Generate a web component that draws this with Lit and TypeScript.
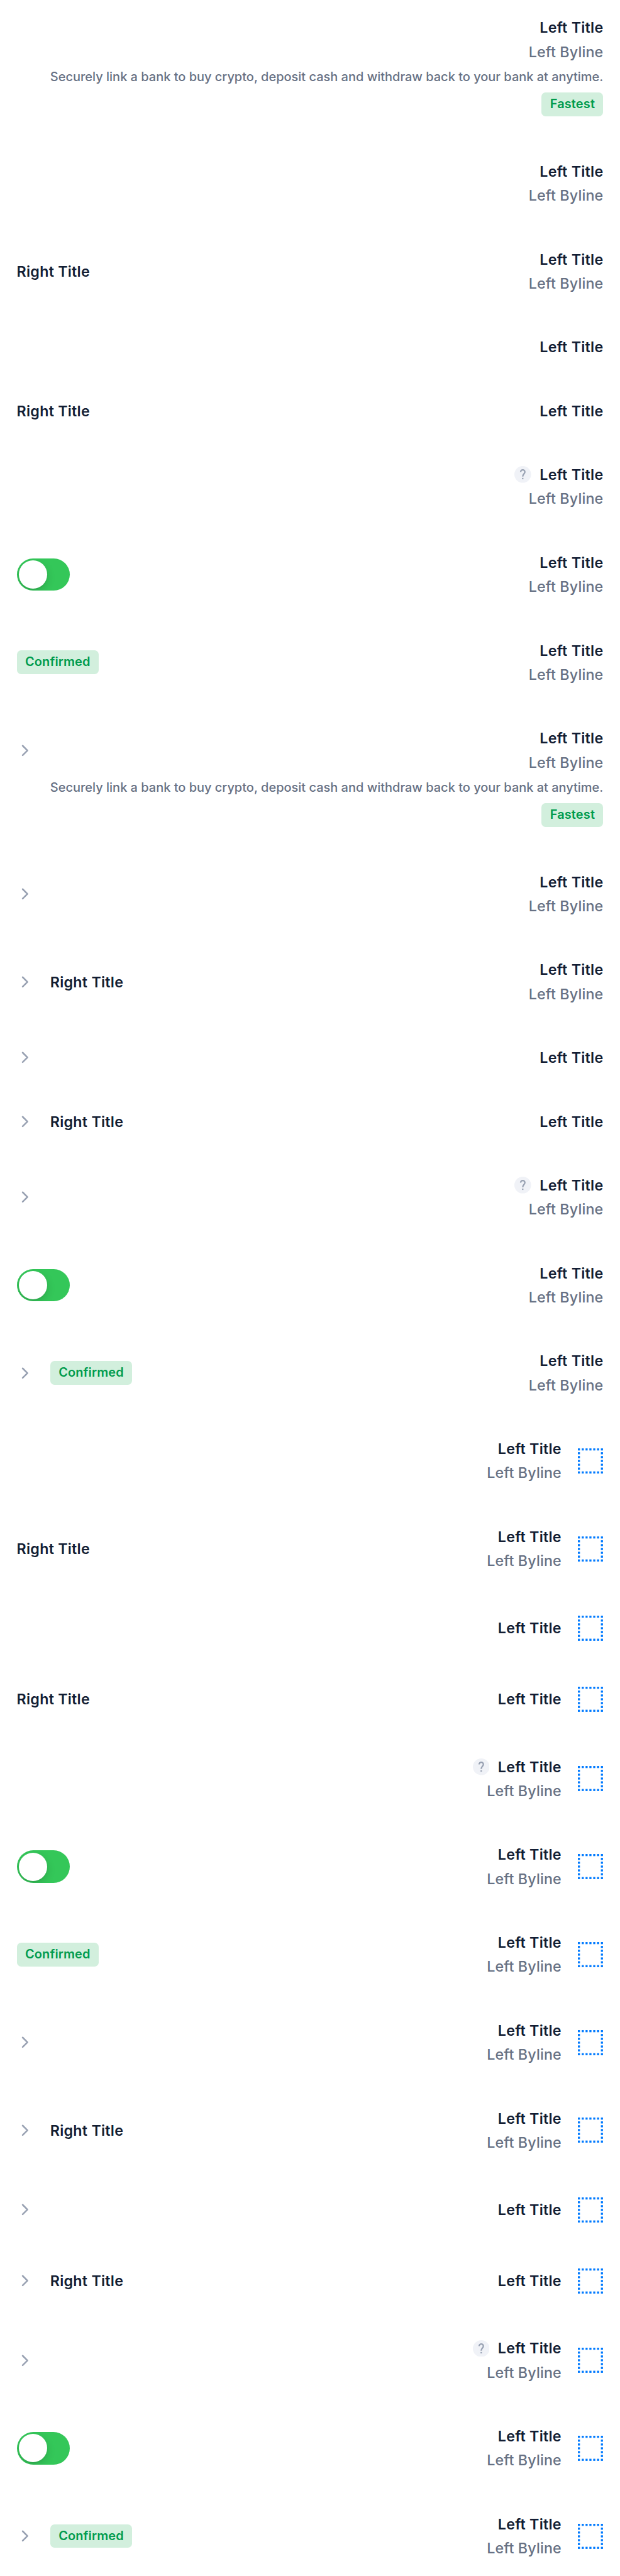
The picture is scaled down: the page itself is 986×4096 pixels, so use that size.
import { LitElement, html, css, svg, nothing } from "lit";
import { customElement, property } from "lit/decorators.js";

interface Row {
  byline?: boolean;
  details?: boolean;
  help?: boolean;
  chevron?: boolean;
  icon?: boolean;
  trailing?: "title" | "toggle" | "tag";
}

@customElement("table-row")
class TableRow extends LitElement {
  @property({ attribute: false }) row: Row = {};

  static styles = css`
    :host {
      display: block;
      padding: calc(54 * var(--u)) calc(48 * var(--u));
    }
    .main {
      display: flex;
      align-items: center;
      justify-content: space-between;
    }
    .side {
      display: flex;
      align-items: center;
      gap: calc(48 * var(--u));
    }
    .texts {
      display: flex;
      flex-direction: column;
      align-items: flex-end;
      gap: calc(18 * var(--u));
    }
    .heading {
      display: flex;
      align-items: center;
      gap: calc(24 * var(--u));
    }
    .title, .byline {
      font-size: calc(42 * var(--u));
      line-height: calc(51 * var(--u));
      padding-top: calc(1 * var(--u));
      margin-bottom: calc(-1 * var(--u));
      white-space: nowrap;
    }
    .title {
      font-weight: 600;
      letter-spacing: calc(0.42 * var(--u));
      color: #121d33;
    }
    .byline {
      font-weight: 500;
      letter-spacing: calc(0.25 * var(--u));
      color: #677184;
    }
    .details {
      display: flex;
      flex-direction: column;
      align-items: flex-end;
      gap: calc(24 * var(--u));
      padding-top: calc(24 * var(--u));
    }
    .description {
      font-size: calc(36 * var(--u));
      line-height: calc(44 * var(--u));
      font-weight: 500;
      letter-spacing: calc(0.015 * var(--u));
      color: #677184;
      white-space: nowrap;
    }
    .tag {
      height: calc(68 * var(--u));
      line-height: calc(68 * var(--u));
      padding: 0 calc(24 * var(--u));
      border-radius: calc(12 * var(--u));
      background: #d2efdd;
      color: #009b4d;
      font-size: calc(36 * var(--u));
      font-weight: 600;
      letter-spacing: calc(0.25 * var(--u));
      white-space: nowrap;
    }
    .toggle {
      box-sizing: border-box;
      width: calc(153 * var(--u));
      height: calc(93 * var(--u));
      margin: calc(-20 * var(--u)) 0;
      padding: calc(6 * var(--u));
      border-radius: calc(47 * var(--u));
      background: #34c759;
      overflow: hidden;
    }
    .knob {
      width: calc(81 * var(--u));
      height: calc(81 * var(--u));
      border-radius: 50%;
      background: #fff;
      box-shadow: 0 calc(9 * var(--u)) calc(24 * var(--u)) rgba(0, 0, 0, 0.15),
        0 calc(3 * var(--u)) calc(3 * var(--u)) rgba(0, 0, 0, 0.06);
    }
    svg { display: block; flex: none; }
    .help, .chevron { width: calc(48 * var(--u)); height: calc(48 * var(--u)); }
    .icon { width: calc(72 * var(--u)); height: calc(72 * var(--u)); }
  `;

  private placeholder() {
    const dots = [];
    for (let i = 0; i < 7; i++) {
      const p = i * 11;
      dots.push(svg`<rect x=${p} y="0" width="6" height="6"/><rect x=${p} y="66" width="6" height="6"/>`);
      if (i > 0 && i < 6) {
        dots.push(svg`<rect x="0" y=${p} width="6" height="6"/><rect x="66" y=${p} width="6" height="6"/>`);
      }
    }
    return html`<svg class="icon" viewBox="0 0 72 72" fill="#007aff">${dots}</svg>`;
  }

  private trailing() {
    switch (this.row.trailing) {
      case "title":
        return html`<span class="title">Right Title</span>`;
      case "toggle":
        return html`<div class="toggle"><div class="knob"></div></div>`;
      case "tag":
        return html`<span class="tag">Confirmed</span>`;
      default:
        return nothing;
    }
  }

  render() {
    const r = this.row;
    return html`
      <div class="main">
        <div class="side">
          ${r.chevron
            ? html`<svg class="chevron" viewBox="0 0 48 48" fill="none" stroke="#98a1b2" stroke-width="4.6" stroke-linecap="round" stroke-linejoin="round"><path d="M16.3 10.4 30 24 16.3 37.6"/></svg>`
            : nothing}
          ${this.trailing()}
        </div>
        <div class="side">
          <div class="texts">
            <div class="heading">
              ${r.help
                ? html`<svg class="help" viewBox="0 0 48 48"><circle cx="24" cy="24" r="24" fill="#f0f2f7"/><path d="M18 17.2a6.1 6.1 0 0 1 12.2 0c0 5-6.2 6-6.2 12.8" fill="none" stroke="#98a1b2" stroke-width="4.1"/><rect x="22" y="34" width="4" height="4" fill="#98a1b2"/></svg>`
                : nothing}
              <span class="title">Left Title</span>
            </div>
            ${r.byline ? html`<span class="byline">Left Byline</span>` : nothing}
          </div>
          ${r.icon ? this.placeholder() : nothing}
        </div>
      </div>
      ${r.details
        ? html`<div class="details">
            <span class="description">Securely link a bank to buy crypto, deposit cash and withdraw back to your bank at anytime.</span>
            <span class="tag">Fastest</span>
          </div>`
        : nothing}
    `;
  }
}

const VARIANTS: Row[] = [
  { byline: true },
  { byline: true, trailing: "title" },
  {},
  { trailing: "title" },
  { byline: true, help: true },
  { byline: true, trailing: "toggle" },
  { byline: true, trailing: "tag" },
];

const withChevron = (r: Row): Row => ({ ...r, chevron: r.trailing !== "toggle" });
const PLAIN: Row[] = [{ byline: true, details: true }, ...VARIANTS];
const WITH_ICON: Row[] = VARIANTS.map((r) => ({ ...r, icon: true }));
const ROWS: Row[] = [
  ...PLAIN,
  ...PLAIN.map(withChevron),
  ...WITH_ICON,
  ...WITH_ICON.map(withChevron),
];

@customElement("app-root")
class AppRoot extends LitElement {
  static styles = css`
    :host {
      --u: calc(986px / 1778);
      display: block;
      width: 986px;
      height: 4096px;
      overflow: hidden;
      background: #fff;
      font-family: Inter, sans-serif;
    }
    .list {
      display: flex;
      flex-direction: column;
      gap: calc(24 * var(--u));
    }
  `;

  render() {
    return html`<div class="list">${ROWS.map((r) => html`<table-row .row=${r}></table-row>`)}</div>`;
  }
}
